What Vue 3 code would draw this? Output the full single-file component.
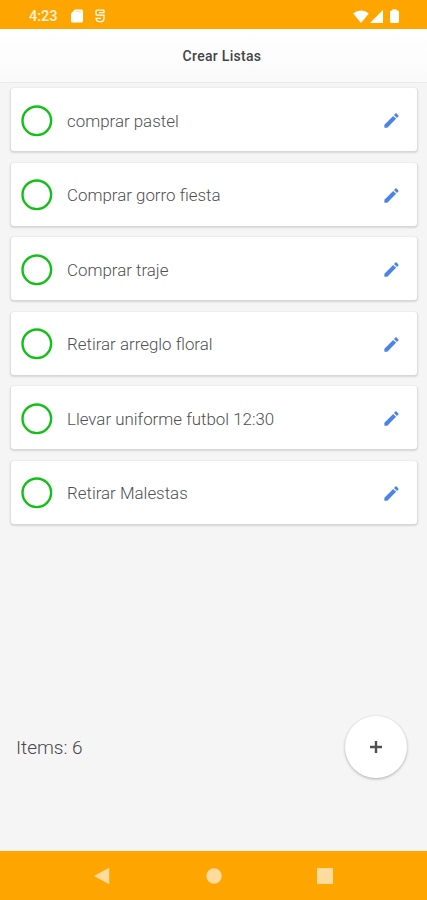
<script setup>

import {computed, ref} from "vue";

const items = ref([
  {id: 1, text: "comprar pastel", done: false},
  {id: 2, text: "Comprar gorro fiesta", done: false},
  {id: 3, text: "Comprar traje", done: false},
  {id: 4, text: "Retirar arreglo floral", done: false},
  {id: 5, text: "Llevar uniforme futbol 12:30", done: false},
  {id: 6, text: "Retirar Malestas", done: false}
]);

const total = computed(() => items.value.length);

</script>

<template>
  <div class="screen">
    <div class="status-bar">
      <span class="clock">4:23</span>
      <svg class="sd" width="12" height="14" viewBox="0 0 12 14">
        <path d="M4 0.5H10.5Q12 0.5 12 2V12Q12 13.5 10.5 13.5H1.5Q0 13.5 0 12V4.5Z" fill="#fff"/>
        <path d="M5 2.7H10.5" stroke="#ffdca6" stroke-width="1.2"/>
      </svg>
      <svg class="debug" width="10" height="14" viewBox="0 0 10 14">
        <path d="M9.2 1.2H2.2Q1 1.2 1 2.4V5Q1 6.2 2.2 6.2H9V9.5Q9 12.8 5 12.8Q1.5 12.8 1 9.5M9 1.2V4M4 3.7H9M0.4 9.4H6" fill="none" stroke="#fff" stroke-width="1.3"/>
      </svg>
      <div class="signals">
        <svg width="16" height="13" viewBox="0 0 16 13">
          <path d="M8 13L0.2 3.4Q3.6 0.4 8 0.4T15.8 3.4Z" fill="#fff"/>
        </svg>
        <svg class="cell" width="13" height="13" viewBox="0 0 13 13">
          <path d="M13 0V13H0Z" fill="#fff"/>
        </svg>
        <svg class="battery" width="9" height="14" viewBox="0 0 9 14">
          <path d="M2.5 0.3H6.5V1.5H7.5Q9 1.5 9 3V12.5Q9 14 7.5 14H1.5Q0 14 0 12.5V3Q0 1.5 1.5 1.5H2.5Z" fill="#fff"/>
        </svg>
      </div>
    </div>

    <header class="header">
      <h1>Crear Listas</h1>
    </header>

    <main class="list">
      <div v-for="item in items" :key="item.id" class="card">
        <button class="check" :class="{ done: item.done }" @click="item.done = !item.done">
          <svg width="32" height="32" viewBox="0 0 32 32">
            <circle cx="15.8" cy="15.8" r="14.3"/>
          </svg>
        </button>
        <span class="text">{{ item.text }}</span>
        <svg class="edit" width="19" height="19" viewBox="0 0 24 24">
          <path d="M3 17.25V21h3.75L17.81 9.94l-3.75-3.75L3 17.25zM20.71 7.04c.39-.39.39-1.02 0-1.41l-2.34-2.34c-.39-.39-1.02-.39-1.41 0l-1.83 1.83 3.75 3.75 1.83-1.83z" fill="#4c84e4"/>
        </svg>
      </div>
    </main>

    <footer class="footer">
      <span class="total">Items: {{ total }}</span>
      <button class="add">
        <svg width="12" height="12" viewBox="0 0 12 12">
          <path d="M6 0V12M0 6H12" stroke="#505050" stroke-width="2.4"/>
        </svg>
      </button>
    </footer>

    <nav class="nav-bar">
      <svg width="16" height="18" viewBox="0 0 16 18">
        <path d="M15.2 0.8V17.2L0 9Z" fill="#ffdb9d"/>
      </svg>
      <svg width="16" height="16" viewBox="0 0 16 16">
        <circle cx="8" cy="8" r="7.7" fill="#ffdb9d"/>
      </svg>
      <svg width="16" height="16" viewBox="0 0 16 16">
        <rect width="16" height="16" rx="0.8" fill="#ffdb9d"/>
      </svg>
    </nav>
  </div>
</template>

<style>
body {
  margin: 0;
}
</style>

<style scoped>

.screen {
  display: flex;
  flex-direction: column;
  height: 900px;
  background-color: #f5f5f5;
  font-family: Roboto, sans-serif;
  overflow: hidden;
}

button {
  padding: 0;
  border: none;
}

svg {
  display: block;
  flex: none;
}

.status-bar {
  display: flex;
  align-items: center;
  box-sizing: border-box;
  height: 29px;
  flex: none;
  padding: 3px 28px 0 29px;
  background-color: #ffa500;
}

.clock {
  width: 29px;
  padding-top: 1px;
  font-size: 14.5px;
  font-weight: 500;
  line-height: 16px;
  color: #fff3df;
}

.sd {
  margin-left: 13px;
}

.debug {
  margin-left: 12px;
}

.signals {
  display: flex;
  align-items: center;
  margin-left: auto;
}

.cell {
  margin-left: 1px;
}

.battery {
  margin-left: 7px;
}

.header {
  display: flex;
  align-items: center;
  justify-content: center;
  box-sizing: border-box;
  height: 54px;
  flex: none;
  padding-left: 17px;
  border-bottom: 1px solid #e9e9e9;
  background: linear-gradient(#fff, #fafafa);
}

h1 {
  margin: 0;
  font-size: 14px;
  font-weight: 500;
  letter-spacing: 0.3px;
  color: #444;
}

.list {
  display: flex;
  flex-direction: column;
  gap: 11.6px;
  padding: 5px 10px 0 11px;
}

.card {
  display: flex;
  align-items: center;
  box-sizing: border-box;
  height: 63px;
  padding: 2px 16px 0 10px;
  border-radius: 3px;
  background-color: #fff;
  box-shadow: 0 1px 2px 1px rgba(0, 0, 0, 0.13);
}

.check {
  width: 32px;
  height: 32px;
  background-color: transparent;
}

.check circle {
  fill: none;
  stroke: #14c018;
  stroke-width: 2.4;
}

.check.done circle {
  fill: #14c018;
}

.text {
  flex: 1;
  margin-left: 14px;
  font-size: 16.9px;
  font-weight: 300;
  line-height: 22px;
  color: #505050;
}

.footer {
  display: flex;
  align-items: center;
  justify-content: space-between;
  height: 62px;
  margin-top: auto;
  margin-bottom: 73px;
  padding: 0 20px 0 16px;
}

.total {
  padding-top: 1px;
  font-size: 19px;
  font-weight: 300;
  color: #484848;
}

.add {
  display: flex;
  align-items: center;
  justify-content: center;
  width: 62px;
  height: 62px;
  border-radius: 50%;
  background-color: #fff;
  box-shadow: 0 1px 3px rgba(0, 0, 0, 0.3);
}

.nav-bar {
  display: flex;
  align-items: center;
  justify-content: space-between;
  box-sizing: border-box;
  height: 49px;
  flex: none;
  padding: 0 94px;
  background-color: #ffa500;
}

</style>
